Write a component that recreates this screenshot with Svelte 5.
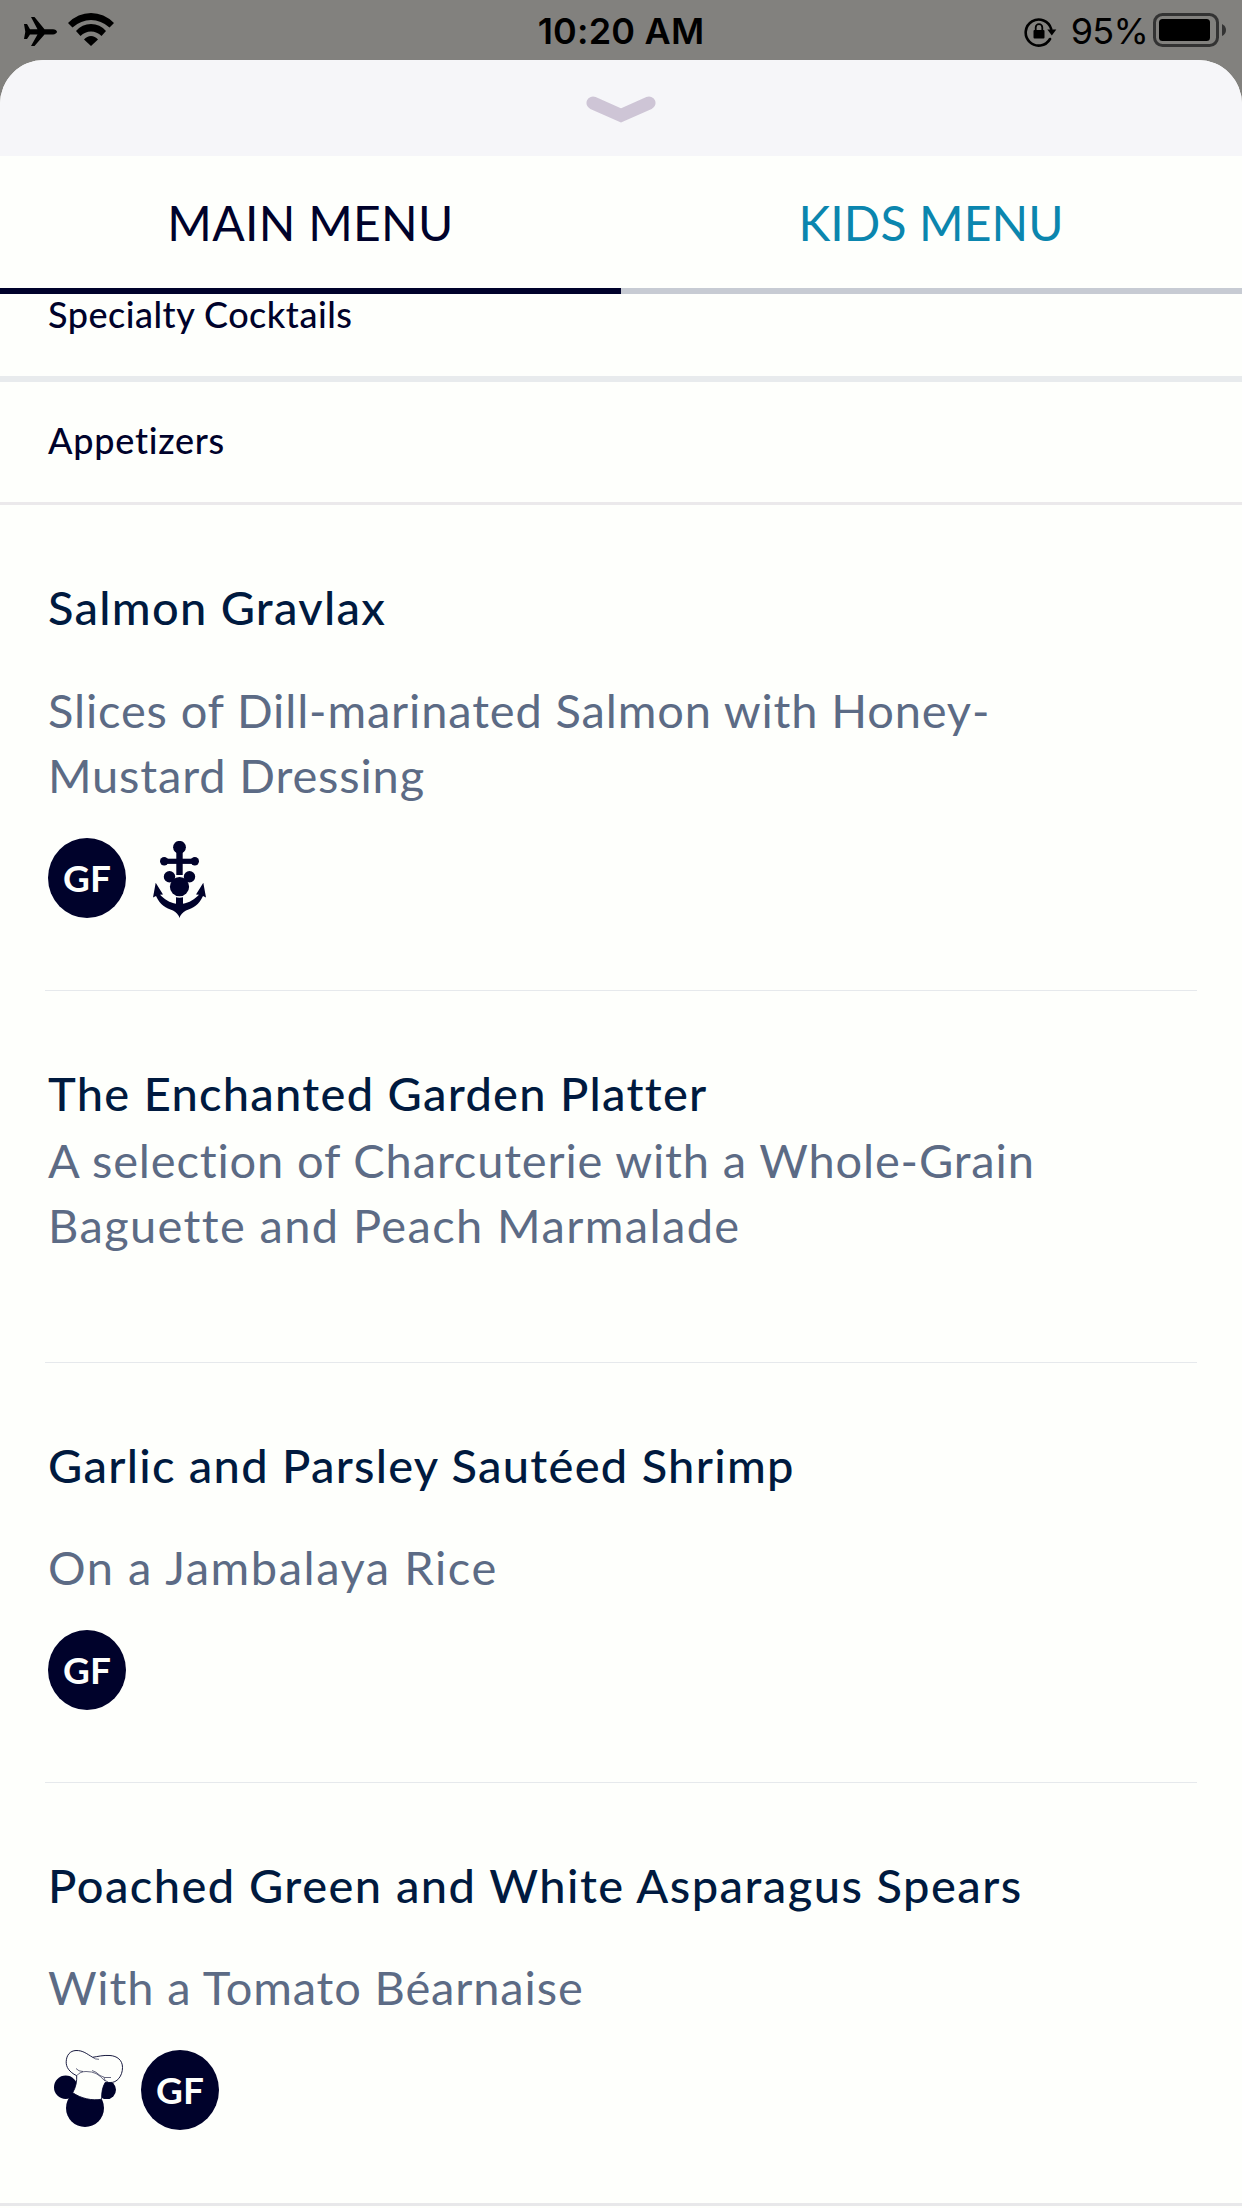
<script lang="ts">
	let activeTab = 0;

	const tabs = ['MAIN MENU', 'KIDS MENU'];

	const dishes = [
		{
			id: 'salmon',
			name: 'Salmon Gravlax',
			lines: ['Slices of Dill-marinated Salmon with Honey-', 'Mustard Dressing'],
			icons: ['gf', 'anchor']
		},
		{
			id: 'platter',
			name: 'The Enchanted Garden Platter',
			lines: ['A selection of Charcuterie with a Whole-Grain', 'Baguette and Peach Marmalade'],
			icons: []
		},
		{
			id: 'shrimp',
			name: 'Garlic and Parsley Sautéed Shrimp',
			lines: ['On a Jambalaya Rice'],
			icons: ['gf']
		},
		{
			id: 'asparagus',
			name: 'Poached Green and White Asparagus Spears',
			lines: ['With a Tomato Béarnaise'],
			icons: ['chef', 'gf']
		}
	];
</script>

<div class="screen">
	<div class="status_bar">
		<div class="status_left">
			<svg class="plane" width="33" height="30" viewBox="0 0 33 30">
				<path
					d="M0 7h3l3 5.200h7.500L7 0h3.500l10 12.200H29c2 0 4 1.300 4 2.600s-2 2.700-4 2.700h-8.500L10.500 29H7l6.500-11.500H6L3 22H0l1.300-7.200z"
				/>
			</svg>
			<svg width="46" height="34" viewBox="0 0 46 34">
				<path d="M0 10Q10 0 23 0T46 10L41.500 14.500Q33 7 23 7T4.500 14.500z" />
				<path d="M8 18Q14 11 23 11T38 18L33.500 23Q29 18.500 23 18.500T12.500 23z" />
				<path d="M16 26.500Q19 23 23 23T30 26.500L23 33z" />
			</svg>
		</div>
		<span class="clock">10:20 AM</span>
		<div class="status_right">
			<svg class="lock" width="33" height="30" viewBox="0 0 33 30">
				<path
					d="M26 22A13 13 0 1 1 27.200 12"
					fill="none"
					stroke="#000"
					stroke-width="2.600"
					stroke-linecap="round"
				/>
				<path d="M23.300 12.500h9L27.800 18.500z" />
				<rect x="9.500" y="13" width="11" height="8.500" rx="1" />
				<path d="M11.700 14v-3.500a3.300 3.300 0 0 1 6.600 0V14" fill="none" stroke="#000" stroke-width="1.800" />
			</svg>
			<span class="percent">95%</span>
			<svg width="74" height="34" viewBox="0 0 74 34">
				<rect x="1.500" y="1.500" width="63" height="31" rx="8" fill="none" stroke="#333" stroke-width="3" />
				<rect x="6" y="6" width="51" height="22" rx="3.500" />
				<path d="M69 11q4 2 4 6t-4 6z" fill="#333" />
			</svg>
		</div>
	</div>

	<div class="sheet">
		<div class="handle">
			<svg width="70" height="28" viewBox="0 0 70 28">
				<path d="M7 7L35 19.500L63 7" />
			</svg>
		</div>

		<div class="tabs">
			{#each tabs as tab, i}
				<button type="button" class="tab" class:active={activeTab === i} on:click={() => (activeTab = i)}>
					{tab}
				</button>
			{/each}
		</div>

		<div class="section first">Specialty Cocktails</div>
		<div class="section second">Appetizers</div>

		<div class="dishes">
			{#each dishes as dish}
				<div class="dish {dish.id}">
					<h2>{dish.name}</h2>
					<p>
						{#each dish.lines as line}
							<span class="line">{line}</span>
						{/each}
					</p>
					<div class="icons">
						{#each dish.icons as icon}
							{#if icon === 'gf'}
								<span class="gf">GF</span>
							{:else if icon === 'anchor'}
								<svg class="anchor" width="55" height="78" viewBox="0 0 55 78">
									<circle cx="27.500" cy="6.300" r="6.400" />
									<path d="M24.300 10h6.400v24h-6.400z" />
									<path d="M12 17.700h31v5.200H12z" />
									<circle cx="12.200" cy="20.300" r="4.200" />
									<circle cx="42.800" cy="20.300" r="4.200" />
									<path
										d="M3.700 41.700L1 56.500l3-1.500C8 64 14 67 21 69.500Q26 72 27.500 77Q29 72 34 69.500C41 67 47 64 51 55l3 1.500L51.300 41.700L44 53.500l3 .300C43 58 37 62 31 62.800V55h-7v7.800C18 62 12 58 8 53.800l3-.300z"
									/>
									<circle class="gap" cx="27.500" cy="45.700" r="11" />
									<circle class="gap" cx="17.500" cy="35.700" r="6.800" />
									<circle class="gap" cx="37.500" cy="35.700" r="6.800" />
									<circle cx="17.500" cy="35.700" r="5.700" />
									<circle cx="37.500" cy="35.700" r="5.700" />
									<circle cx="27.500" cy="45.700" r="9.600" />
								</svg>
							{:else}
								<svg class="chef" width="71" height="80" viewBox="0 0 71 80">
									<circle cx="11.700" cy="37.300" r="11.700" />
									<circle cx="52.700" cy="39.800" r="9.300" />
									<circle cx="31" cy="58" r="19" />
									<g class="hat">
										<path
											d="M22.700 25.700C15 22 12 17 12.200 11.700C12.500 5 16 .8 22 .5C29 .3 33 4 38.700 7.300C44 6.500 49 5 56 5.500C63 6 68.500 10 68.500 17.500C68.500 26 63 33 56 32.500L51.300 32.300C48.500 37 47.500 42 47.700 49.200C38 51 27 48.500 18.700 42.700C22 37 23 31 22.700 25.700z"
										/>
										<path
											d="M22 18.500Q24.500 21.500 29 21.500M22.700 25.700Q26 21.500 32 21.500T42 23.500T51 31M38 20.500Q42 21.500 46 25.500Q50 28.500 57 27.500M50 27.500Q50 31 54 32M38.700 7.300Q41 9.500 45 9.300"
										/>
									</g>
								</svg>
							{/if}
						{/each}
					</div>
				</div>
			{/each}
		</div>
		<div class="bottom_line"></div>
	</div>
</div>

<style>
	:global(body) {
		background: #fefffc;
	}

	.screen {
		width: 1242px;
		height: 2208px;
		overflow: hidden;
		background: #82817e;
		font-family: Lato, 'Liberation Sans', sans-serif;
		font-variant-ligatures: none;
	}

	.status_bar {
		display: grid;
		grid-template-columns: 1fr auto 1fr;
		height: 60px;
		font-family: Inter, sans-serif;
		line-height: 60px;
	}

	.status_left,
	.status_right {
		display: flex;
		align-items: flex-start;
	}

	.status_left {
		padding: 13px 0 0 24px;
		gap: 11px;
	}

	.plane {
		margin-top: 4px;
	}

	.clock {
		font-size: 36px;
		font-weight: 600;
		letter-spacing: 0.2px;
		padding-top: 1px;
	}

	.status_right {
		justify-content: flex-end;
		padding: 13px 15px 0 0;
	}

	.lock {
		margin: 4px 14px 0 0;
	}

	.percent {
		font-size: 36px;
		letter-spacing: -0.8px;
		margin: -12px 5px 0 0;
	}

	.sheet {
		height: 2148px;
		border-radius: 44px 44px 0 0;
		background: #fefffc;
		overflow: hidden;
	}

	.handle {
		display: flex;
		justify-content: center;
		height: 96px;
		padding-top: 36px;
		box-sizing: border-box;
		background: #f6f6f9;
	}

	.handle path {
		fill: none;
		stroke: #cec5d6;
		stroke-width: 13;
		stroke-linecap: round;
	}

	.tabs {
		display: flex;
		height: 138px;
	}

	.tab {
		box-sizing: border-box;
		width: 50%;
		padding: 1px 1px 0 0;
		border: none;
		border-bottom: 6px solid #c7cbd3;
		background: none;
		color: #0b86ae;
		font-family: inherit;
		font-size: 48px;
		letter-spacing: 0.1px;
		line-height: 131px;
	}

	.tab.active {
		padding-right: 0;
		border-color: #00022b;
		color: #00022b;
		letter-spacing: 0.3px;
	}

	.section {
		box-sizing: border-box;
		padding-left: 48px;
		color: #00022b;
		font-size: 36px;
		font-weight: 500;
		letter-spacing: 0.5px;
		line-height: 40px;
	}

	.first {
		height: 88px;
		border-bottom: 6px solid #e8ebed;
	}

	.second {
		height: 123px;
		padding-top: 38px;
		border-bottom: 3px solid #ebe9eb;
		letter-spacing: 0.75px;
	}

	.dishes {
		padding: 0 45px;
	}

	.dish {
		box-sizing: border-box;
		height: 486px;
		padding: 70px 3px 0;
		border-bottom: 1px solid #e6e9ec;
	}

	h2 {
		margin: 0;
		color: #001a3f;
		font-size: 47px;
		font-weight: 500;
		letter-spacing: 1.28px;
		line-height: 65px;
		white-space: nowrap;
	}

	p {
		margin: 37px 0 0;
		color: #5c6b85;
		font-size: 47px;
		letter-spacing: 0.85px;
		line-height: 65px;
		white-space: nowrap;
	}

	.line {
		display: block;
	}

	.salmon p {
		margin-top: 38px;
	}

	.platter {
		height: 372px;
	}

	.platter p {
		margin-top: 2px;
	}

	.platter .line + .line {
		letter-spacing: 1.38px;
	}

	.shrimp {
		height: 420px;
	}

	.shrimp p {
		letter-spacing: 1.55px;
	}

	.asparagus {
		height: 420px;
		border: none;
	}

	.asparagus h2 {
		letter-spacing: 1.45px;
	}

	.icons {
		display: flex;
		margin-top: 30px;
	}

	.gf {
		display: flex;
		justify-content: center;
		width: 78px;
		height: 80px;
		border-radius: 50%;
		background: #00022b;
		color: #fefffc;
		font-size: 37px;
		font-weight: 700;
		line-height: 80px;
	}

	.icons svg {
		fill: #00022b;
	}

	.anchor {
		margin: 3px 0 0 26px;
	}

	.icons .gap {
		fill: #fefffc;
	}

	.chef {
		margin: 0 16px 0 6px;
	}

	.hat path {
		fill: #fefffc;
		stroke: #00022b;
		stroke-width: 0.9;
	}

	.hat path + path {
		fill: none;
		stroke-width: 0.6;
	}

	.bottom_line {
		height: 3px;
		background: #e8e8ea;
	}
</style>
